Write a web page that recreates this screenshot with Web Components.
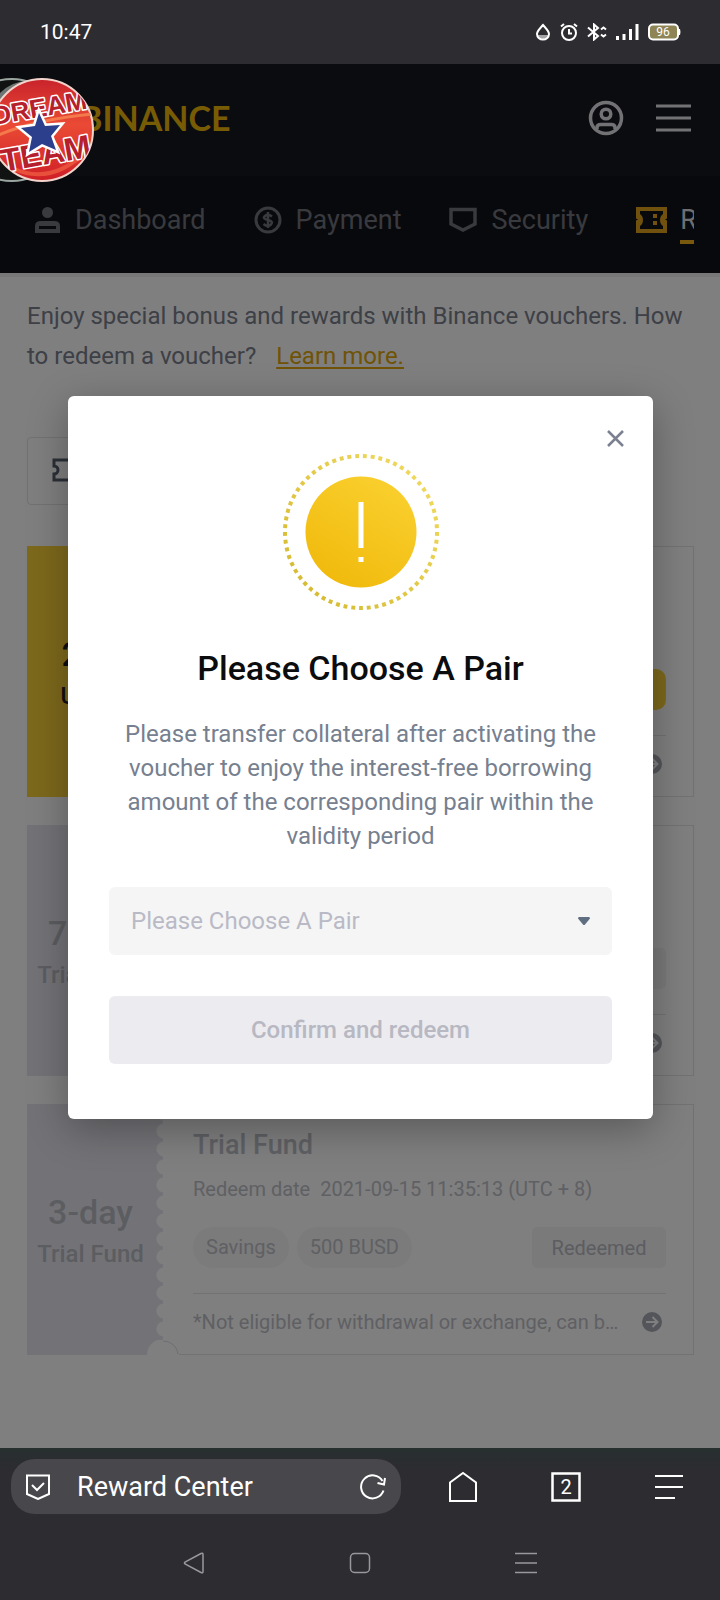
<!DOCTYPE html>
<html lang="en">
<head>
<meta charset="utf-8">
<meta name="viewport" content="width=device-width, initial-scale=1">
<title>Reward Center</title>
<style>
    html, body {
        margin: 0;
        min-height: 100%;
    }
    body {
        display: flex;
        flex-direction: column;
        min-height: 100vh;
        background: #2d2c31;
        font-family: Roboto, "Liberation Sans", sans-serif;
        font-size: 24px;
    }
</style>
</head>
<body>
<status-bar time="10:47" battery="96"></status-bar>

<app-page>
    <site-header>
        <nav-item icon="user">Dashboard</nav-item>
        <nav-item icon="coin">Payment</nav-item>
        <nav-item icon="shield">Security</nav-item>
        <nav-item icon="ticket" active>Reward Center</nav-item>
    </site-header>
    <voucher-list>
        <voucher-card tone="gold" amount="200" unit="USDT"></voucher-card>
        <voucher-card amount="7-day" unit="Trial Fund"></voucher-card>
        <voucher-card amount="3-day" unit="Trial Fund">
            <span slot="title">Trial Fund</span>
            <span slot="date">Redeem date&nbsp; 2021-09-15 11:35:13 (UTC + 8)</span>
            <voucher-tag slot="tags">Savings</voucher-tag>
            <voucher-tag slot="tags">500 BUSD</voucher-tag>
            <span slot="action">Redeemed</span>
            <span slot="note">*Not eligible for withdrawal or exchange, can be used</span>
        </voucher-card>
    </voucher-list>
    <alert-dialog slot="overlay">
        <span slot="title">Please Choose A Pair</span>
        Please transfer collateral after activating the voucher to enjoy the interest-free borrowing amount of the corresponding pair within the validity period
        <span slot="confirm">Confirm and redeem</span>
    </alert-dialog>
    <team-badge slot="badge"></team-badge>
</app-page>

<browser-bar tabs="2">Reward Center</browser-bar>
<system-nav></system-nav>

<script>
    class StatusBar extends HTMLElement {
        constructor() {
            super();
            this.attachShadow({ mode: 'open' });
            this.shadowRoot.innerHTML = `
                <style>
                    :host {
                        display: flex;
                        align-items: center;
                        justify-content: space-between;
                        height: 64px;
                        padding: 0 39px 0 40px;
                        color: #fff;
                        font-size: 21px;
                    }
                    .icons { display: flex; align-items: center; gap: 9px; }
                    svg { display: block; }
                    text { font: 12px Roboto, sans-serif; }
                </style>
                <span>${this.getAttribute('time')}</span>
                <div class="icons">
                    <svg width="16" height="18" viewBox="0 0 16 18" fill="none" stroke="#fff" stroke-width="2">
                        <path d="M2.500 12h11c-1 3-3 4-5.500 4s-4.500-1-5.500-4z" fill="#a5a5a8" stroke="none"/>
                        <path d="M8 2C5.500 5 2 8 2 11a6 5.500 0 0 0 12 0C14 8 10.500 5 8 2z"/>
                    </svg>
                    <svg width="18" height="18" viewBox="0 0 18 18" fill="none" stroke="#fff" stroke-width="2">
                        <circle cx="9" cy="10" r="7"/><path d="M9 6v4.500h3M1 3.500L4 1M17 3.500L14 1"/>
                    </svg>
                    <svg width="20" height="18" viewBox="0 0 20 18" fill="none" stroke="#fff" stroke-width="2">
                        <path d="M1 4.500l10 8.500-4 3.500V1.500L11 5 1 13.500"/><path d="M14 6.500l2.500-2 2.500 2M14 11.500l2.500 2 2.500-2"/>
                    </svg>
                    <svg width="23" height="18" viewBox="0 0 23 18" fill="#fff">
                        <path d="M0 13h3v4H0zM6.500 11h3v6h-3zM13 6h3v11h-3zM19.500 1h3v16h-3z"/>
                    </svg>
                    <svg width="33" height="18" viewBox="0 0 33 18">
                        <rect x="1" y="1.500" width="29" height="15" rx="4" fill="#8f8455" stroke="#fff" stroke-width="2"/>
                        <path d="M31 6h1q1 3 0 6h-1z" fill="#fff"/>
                        <text x="15" y="13" fill="#fff" text-anchor="middle">${this.getAttribute('battery')}</text>
                    </svg>
                </div>
            `;
        }
    }

    class AppPage extends HTMLElement {
        constructor() {
            super();
            this.attachShadow({ mode: 'open' });
            this.shadowRoot.innerHTML = `
                <style>
                    :host {
                        display: block;
                        flex: 1;
                        position: relative;
                        background: #fff;
                    }
                    .scrim {
                        position: absolute;
                        inset: 0;
                        display: flex;
                        align-items: center;
                        padding: 2px 67px 0 68px;
                        background: rgba(0, 0, 0, 0.5);
                    }
                    .badge { position: absolute; left: 0; top: 12px; }
                </style>
                <slot></slot>
                <div class="scrim"><slot name="overlay"></slot></div>
                <div class="badge"><slot name="badge"></slot></div>
            `;
        }
    }

    class SiteHeader extends HTMLElement {
        constructor() {
            super();
            this.attachShadow({ mode: 'open' });
            this.shadowRoot.innerHTML = `
                <style>
                    :host { display: block; background: #11121a; border-bottom: 4px solid #f0f0f0; }
                    .top {
                        display: flex;
                        align-items: center;
                        height: 112px;
                        padding: 0 28px 4px 27px;
                        background: #17181f;
                        box-sizing: border-box;
                    }
                    .logo {
                        display: flex;
                        align-items: center;
                        gap: 9px;
                        margin-right: auto;
                        color: #f0b90b;
                        font: bold 34px/40px Lato, sans-serif;
                        text-decoration: none;
                    }
                    button { padding: 0; border: 0; background: none; }
                    button + button { margin-left: 31px; }
                    svg { display: block; }
                    nav {
                        display: flex;
                        align-items: center;
                        gap: 48px;
                        height: 97px;
                        margin: 0 26px 0 34px;
                        padding-bottom: 10px;
                        box-sizing: border-box;
                        overflow: hidden;
                    }
                </style>
                <div class="top">
                    <a class="logo" href="#">
                        <svg width="44" height="44" viewBox="0 0 44 44" fill="#f0b90b">
                            <path d="M22 3l12 12-5 5-7-7-7 7-5-5zM22 41l12-12-5-5-7 7-7-7-5 5zM22 17l5 5-5 5-5-5zM6 17l5 5-5 5-5-5zM38 17l5 5-5 5-5-5z"/>
                        </svg>
                        BINANCE
                    </a>
                    <button aria-label="Account">
                        <svg width="36" height="36" viewBox="0 0 36 36" fill="none" stroke="#e4e5e9" stroke-width="3.500">
                            <circle cx="18" cy="18" r="15.500"/>
                            <circle cx="18" cy="14" r="4.800"/>
                            <path d="M9 29v-1.500q0-3 4-3h10q4 0 4 3V29"/>
                        </svg>
                    </button>
                    <button aria-label="Menu">
                        <svg width="37" height="30" viewBox="0 0 37 30" fill="#e4e5e9">
                            <path d="M1 1.500h35v3H1zM1 13.500h35v3H1zM1 25.500h35v3H1z"/>
                        </svg>
                    </button>
                </div>
                <nav><slot></slot></nav>
            `;
        }
    }

    const navIcons = {
        user: `<svg width="27" height="28" viewBox="0 0 27 28" fill="#73747c">
            <circle cx="13.500" cy="6.500" r="5.500"/>
            <path fill-rule="evenodd" d="M1 27v-7q0-5 6-5h13q6 0 6 5v7zM5 23h17v-3H5z"/></svg>`,
        coin: `<svg width="28" height="28" viewBox="0 0 28 28" fill="none" stroke="#73747c" stroke-width="3">
            <circle cx="14" cy="14" r="12"/>
            <path d="M18 10.500Q14 7.500 11 10t3 4q6 1.500 3 4.500t-7.500-.5M14 6v16" stroke-width="2.500"/></svg>`,
        shield: `<svg width="28" height="26" viewBox="0 0 28 26" fill="none" stroke="#73747c" stroke-width="3.500">
            <path d="M2 2.500h24V17L14 23 2 17z"/></svg>`,
        ticket: `<svg width="31" height="26" viewBox="0 0 31 26">
            <path fill="#e0a31d" fill-rule="evenodd" d="M0 0h31v11.500l-2 1 2 1V26H0V13.500l2-1-2-1zM4 4v3q3 2 3 6t-3 6v3h23v-3q-3-2-3-6t3-6V4zM17 7h4v4h-4zM17 14h4v4h-4z"/></svg>`
    };

    class NavItem extends HTMLElement {
        constructor() {
            super();
            this.attachShadow({ mode: 'open' });
            this.shadowRoot.innerHTML = `
                <style>
                    :host { display: block; flex: none; }
                    a {
                        display: flex;
                        align-items: center;
                        gap: 14px;
                        color: #73747c;
                        font-size: 27px;
                        line-height: 40px;
                        text-decoration: none;
                        white-space: nowrap;
                    }
                    span { border: solid transparent; border-width: 4px 0; }
                    :host([active]) a { gap: 13px; color: #dcdde2; }
                    :host([active]) span { border-bottom-color: #f0b21c; }
                </style>
                <a href="#">${navIcons[this.getAttribute('icon')]}<span><slot></slot></span></a>
            `;
        }
    }

    class VoucherList extends HTMLElement {
        constructor() {
            super();
            this.attachShadow({ mode: 'open' });
            this.shadowRoot.innerHTML = `
                <style>
                    :host { display: block; padding: 19px 26px 90px 27px; }
                    p { margin: 0 0 61px; color: #7a808c; line-height: 40px; }
                    a { margin-left: 14px; color: #e0a60a; text-underline-offset: 3px; }
                    .tab {
                        display: block;
                        width: 30%;
                        height: 68px;
                        margin-bottom: 41px;
                        padding: 0 24px;
                        border: 1px solid #e4e4e6;
                        border-radius: 4px;
                        background: none;
                        text-align: left;
                    }
                    .cards { display: grid; gap: 28px; }
                </style>
                <p>Enjoy special bonus and rewards with Binance vouchers. How to redeem a voucher? <a href="#">Learn more.</a></p>
                <button class="tab" aria-label="Vouchers">
                    <svg width="30" height="24" viewBox="0 0 30 24" fill="none" stroke="#566070" stroke-width="3">
                        <path d="M2 2h26v6a4 4 0 0 0 0 8v6H2v-6a4 4 0 0 0 0-8z"/>
                    </svg>
                </button>
                <div class="cards"><slot></slot></div>
            `;
        }
    }

    class VoucherTag extends HTMLElement {
        constructor() {
            super();
            this.attachShadow({ mode: 'open' });
            this.shadowRoot.innerHTML = `
                <style>
                    :host {
                        display: block;
                        padding: 0 13px;
                        border-radius: 20px;
                        background: #f7f7f7;
                        line-height: 41px;
                    }
                </style>
                <slot></slot>
            `;
        }
    }

    class VoucherCard extends HTMLElement {
        constructor() {
            super();
            this.attachShadow({ mode: 'open' });
            this.shadowRoot.innerHTML = `
                <style>
                    :host {
                        display: grid;
                        grid-template-columns: 136px 1fr;
                        height: 251px;
                        position: relative;
                        color: #bfc1c8;
                        --panel: #e6e6ee;
                        --panel-text: #b9bac2;
                        --action: #f5f5f6;
                    }
                    :host([tone="gold"]) {
                        --panel: #fbd338;
                        --panel-text: #1e2026;
                        --action: #fbd338;
                    }
                    .panel {
                        display: flex;
                        flex-direction: column;
                        align-items: center;
                        justify-content: center;
                        gap: 2px;
                        padding: 7px 9px 0 0;
                        /* torn edge on the right side */
                        background:
                            radial-gradient(circle at 8px 9px, #fff 7px, transparent 8px) right top / 7px 18px repeat-y,
                            var(--panel);
                        color: var(--panel-text);
                        font-weight: 500;
                        line-height: 40px;
                    }
                    .amount { font-size: 34px; }
                    .body {
                        display: flex;
                        flex-direction: column;
                        min-width: 0;
                        padding: 20px 27px 0 30px;
                        border: 1px solid #e4e4e6;
                        border-left: 0;
                        font-size: 20px;
                    }
                    .title { height: 40px; font-size: 27px; font-weight: 500; line-height: 40px; }
                    .date { height: 40px; margin-top: 4px; line-height: 40px; }
                    .row { display: flex; height: 41px; gap: 8px; margin-top: 18px; font-weight: 400; }
                    button {
                        min-width: 134px;
                        margin-left: auto;
                        border: 0;
                        border-radius: 5px;
                        background: var(--action);
                        color: #b8bac2;
                        font: inherit;
                    }
                    :host([tone="gold"]) button { border-radius: 10px; }
                    .note {
                        display: flex;
                        align-items: center;
                        gap: 16px;
                        height: 56px;
                        margin-top: 25px;
                        border-top: 1px solid #e4e4e6;
                        padding-right: 4px;
                    }
                    .note div {
                        flex: 1;
                        min-width: 0;
                        overflow: hidden;
                        text-overflow: ellipsis;
                        white-space: nowrap;
                    }
                    svg { display: block; flex: none; }
                    .notch { position: absolute; left: 119px; bottom: 0; }
                </style>
                <div class="panel">
                    <span class="amount">${this.getAttribute('amount')}</span>
                    <span>${this.getAttribute('unit')}</span>
                </div>
                <div class="body">
                    <div class="title"><slot name="title"></slot></div>
                    <div class="date"><slot name="date"></slot></div>
                    <div class="row">
                        <slot name="tags"></slot>
                        <button><slot name="action"></slot></button>
                    </div>
                    <div class="note">
                        <div><slot name="note"></slot></div>
                        <svg width="20" height="20" viewBox="0 0 20 20">
                            <circle cx="10" cy="10" r="10" fill="#a7aab4"/>
                            <path d="M4 10h11M10.500 5l5 5-5 5" fill="none" stroke="#fff" stroke-width="2"/>
                        </svg>
                    </div>
                </div>
                <svg class="notch" width="34" height="15" viewBox="0 0 34 15">
                    <path d="M1 15a16 16 0 0 1 32 0z" fill="#fff"/>
                    <path d="M17 1a15 14 0 0 1 15 13" fill="none" stroke="#dcdce2" stroke-width="1"/>
                </svg>
            `;
        }
    }

    class AlertDialog extends HTMLElement {
        constructor() {
            super();
            this.attachShadow({ mode: 'open' });
            this.shadowRoot.innerHTML = `
                <style>
                    :host {
                        display: block;
                        flex: 1;
                        position: relative;
                        padding: 56px 41px 55px;
                        border-radius: 6px;
                        background: #fff;
                        box-shadow: 0 10px 40px rgba(0, 0, 0, 0.3);
                        text-align: center;
                    }
                    .close {
                        position: absolute;
                        top: 33px;
                        right: 28px;
                        padding: 0;
                        border: 0;
                        background: none;
                    }
                    svg { display: block; }
                    .icon { margin: 0 auto 32px; }
                    h2 { margin: 0 0 25px; color: #0b0c0e; font-size: 34px; font-weight: 500; line-height: 48px; }
                    p { margin: 0 8px 34px; color: #76808f; line-height: 34px; }
                    .field { display: grid; align-items: center; margin-bottom: 41px; }
                    .field > * { grid-area: 1 / 1; }
                    .field svg { justify-self: end; margin-right: 22px; pointer-events: none; }
                    select {
                        appearance: none;
                        width: 100%;
                        height: 68px;
                        padding: 0 22px;
                        border: 0;
                        border-radius: 6px;
                        background: #f5f5f5;
                        color: #b9bac6;
                        font: inherit;
                    }
                    .confirm {
                        display: block;
                        width: 100%;
                        height: 68px;
                        border: 0;
                        border-radius: 6px;
                        background: #ecebf0;
                        color: #b7b8c2;
                        font: inherit;
                        font-weight: 500;
                    }
                </style>
                <button class="close" aria-label="Close">
                    <svg width="19" height="19" viewBox="0 0 19 19" fill="none" stroke="#7b8190" stroke-width="2.500">
                        <path d="M2 2l15 15M17 2L2 17"/>
                    </svg>
                </button>
                <svg class="icon" width="160" height="160" viewBox="0 0 160 160">
                    <defs>
                        <linearGradient id="fill" x1="0.2" y1="1" x2="0.8" y2="0">
                            <stop offset="0" stop-color="#f0b90b"/>
                            <stop offset="1" stop-color="#fad02f"/>
                        </linearGradient>
                        <linearGradient id="ring" x1="0" y1="1" x2="1" y2="0">
                            <stop offset="0" stop-color="#d2b62c"/>
                            <stop offset="1" stop-color="#f3dc62"/>
                        </linearGradient>
                    </defs>
                    <circle cx="80" cy="80" r="76" pathLength="366" fill="none" stroke="url(#ring)" stroke-width="4" stroke-dasharray="3 3"/>
                    <circle cx="80" cy="80" r="55.500" fill="url(#fill)"/>
                    <path d="M77.500 50h5v46h-5zM77.500 105h5v5h-5z" fill="#fff"/>
                </svg>
                <h2><slot name="title"></slot></h2>
                <p><slot></slot></p>
                <div class="field">
                    <select aria-label="Pair"><option>Please Choose A Pair</option></select>
                    <svg width="12" height="8" viewBox="0 0 12 8" fill="#5f6e80"><path d="M1 0h10q1 0 1 1.500L7 7.500q-1 1-2 0L0 1.500Q0 0 1 0z"/></svg>
                </div>
                <button class="confirm" disabled><slot name="confirm"></slot></button>
            `;
        }
    }

    // floating round sticker at the left edge of the screen
    class TeamBadge extends HTMLElement {
        constructor() {
            super();
            this.attachShadow({ mode: 'open' });
            this.shadowRoot.innerHTML = `
                <style>
                    :host { display: block; }
                    svg { display: block; }
                    text {
                        font: bold 26px "Liberation Sans", sans-serif;
                        fill: #b5202c;
                        stroke: #fff;
                        stroke-width: 3px;
                        stroke-linejoin: round;
                        paint-order: stroke;
                    }
                    .team { font-size: 32px; }
                </style>
                <svg width="98" height="108" viewBox="0 0 98 108">
                    <defs>
                        <linearGradient id="ball" x1="0" y1="0" x2="0" y2="1">
                            <stop offset="0" stop-color="#c9232b"/>
                            <stop offset="0.45" stop-color="#ea4a35"/>
                            <stop offset="1" stop-color="#cf1f27"/>
                        </linearGradient>
                        <clipPath id="round"><circle cx="42" cy="54" r="51"/></clipPath>
                    </defs>
                    <circle cx="12" cy="54" r="51" fill="#101312" stroke="#9aa5a0" stroke-width="2"/>
                    <path d="M0 17Q12 5 28 5L8 24 0 28z" fill="#6d7472"/>
                    <circle cx="42" cy="54" r="51" fill="url(#ball)" stroke="#f3d4cc" stroke-width="2"/>
                    <g clip-path="url(#round)">
                        <path d="M-8 62Q30 44 94 38" fill="none" stroke="#f47a4b" stroke-width="3"/>
                        <path d="M12 92Q50 110 86 76" fill="none" stroke="#e8503c" stroke-width="4"/>
                        <text x="-6" y="48" transform="rotate(-10 0 48)">DREAM</text>
                        <text class="team" x="3" y="96" transform="rotate(-10 3 96)">TEAM</text>
                    </g>
                    <path d="M39 37l6 13 15-1-9 11 5 14-14-6-13 8 3-15-11-9 14-2z" fill="#2c3f8c" stroke="#fff" stroke-width="5" paint-order="stroke"/>
                </svg>
            `;
        }
    }

    class BrowserBar extends HTMLElement {
        constructor() {
            super();
            this.attachShadow({ mode: 'open' });
            this.shadowRoot.innerHTML = `
                <style>
                    :host {
                        display: flex;
                        align-items: center;
                        padding: 11px 0 11px 11px;
                        background: linear-gradient(#28302f, #2a2d30 12px, #2d2c31 24px);
                        color: #fff;
                    }
                    .address {
                        display: flex;
                        align-items: center;
                        flex: 0 0 55%;
                        height: 55px;
                        margin-right: 11px;
                        padding: 0 14px 0 15px;
                        border-radius: 24px;
                        background: #48474c;
                        box-sizing: border-box;
                        font-size: 27px;
                    }
                    .address span { flex: 1; margin-left: 27px; }
                    button { padding: 0; border: 0; background: none; color: inherit; }
                    .tool { flex: 1; display: flex; justify-content: center; }
                    svg { display: block; fill: none; stroke: #fff; }
                    text { font: 20px Roboto, sans-serif; fill: #fff; stroke: none; }
                </style>
                <div class="address">
                    <svg width="24" height="26" viewBox="0 0 24 26" stroke-width="2">
                        <path d="M1 1.500h22V20L12 25 1 20z"/><path d="M6 11l5 5 7-7"/>
                    </svg>
                    <span><slot></slot></span>
                    <button aria-label="Reload">
                        <svg width="27" height="26" viewBox="0 0 27 26" stroke-width="2">
                            <path d="M23.500 16.500A11.500 11.500 0 1 1 22.500 7"/><path d="M25 4l-1 6.500-6.500-1.500"/>
                        </svg>
                    </button>
                </div>
                <button class="tool" aria-label="Home">
                    <svg width="28" height="32" viewBox="0 0 28 32" stroke-width="2">
                        <path d="M1 11.500L14 2l13 9.500V30H1z"/>
                    </svg>
                </button>
                <button class="tool" aria-label="Tabs">
                    <svg width="30" height="30" viewBox="0 0 30 30" stroke-width="2.500">
                        <path d="M1.500 1.500h27v27h-27z"/><text x="15" y="22" text-anchor="middle">${this.getAttribute('tabs')}</text>
                    </svg>
                </button>
                <button class="tool" aria-label="Menu">
                    <svg width="28" height="28" viewBox="0 0 28 28" stroke-width="2">
                        <path d="M0 3h28M0 14h28M0 25h20"/>
                    </svg>
                </button>
            `;
        }
    }

    class SystemNav extends HTMLElement {
        constructor() {
            super();
            this.attachShadow({ mode: 'open' });
            this.shadowRoot.innerHTML = `
                <style>
                    :host {
                        display: flex;
                        justify-content: center;
                        align-items: center;
                        gap: 20%;
                        height: 75px;
                    }
                    button { padding: 0; border: 0; background: none; }
                    svg { display: block; fill: none; stroke: #99989d; stroke-width: 1.500; }
                </style>
                <button aria-label="Back"><svg width="22" height="22" viewBox="0 0 22 22"><path d="M18 1.500q2-1 2 1v17q0 2-2 1L2 12q-1-1 0-2z"/></svg></button>
                <button aria-label="Home"><svg width="22" height="22" viewBox="0 0 22 22"><rect x="1.500" y="1.500" width="19" height="19" rx="4"/></svg></button>
                <button aria-label="Recent apps"><svg width="22" height="22" viewBox="0 0 22 22"><path d="M0 1.500h22M0 11h22M0 20.500h22"/></svg></button>
            `;
        }
    }

    customElements.define("status-bar", StatusBar);
    customElements.define("app-page", AppPage);
    customElements.define("site-header", SiteHeader);
    customElements.define("nav-item", NavItem);
    customElements.define("voucher-list", VoucherList);
    customElements.define("voucher-tag", VoucherTag);
    customElements.define("voucher-card", VoucherCard);
    customElements.define("alert-dialog", AlertDialog);
    customElements.define("team-badge", TeamBadge);
    customElements.define("browser-bar", BrowserBar);
    customElements.define("system-nav", SystemNav);
</script>
</body>
</html>
